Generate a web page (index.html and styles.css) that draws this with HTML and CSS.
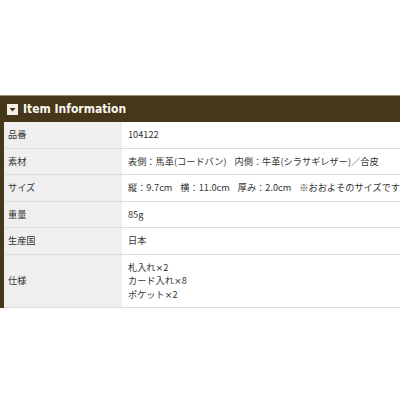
FILE: index.html
```html
<!DOCTYPE html>
<html lang="ja">
<head>
<meta charset="utf-8">
<link rel="stylesheet" href="styles.css">
</head>
<body>
<section class="info">
  <h2 class="info-title">
    <svg class="info-icon" width="11" height="11" viewBox="0 0 11 11"><rect width="11" height="11" fill="#f4efe6"/><path d="M2.5 4 L8.5 4 L5.5 7.5 Z" fill="#46371a"/></svg>
    <span>Item Information</span>
  </h2>
  <div class="info-table">
    <div class="row"><div class="th">品番</div><div class="td">104122</div></div>
    <div class="row"><div class="th">素材</div><div class="td">表側：馬革(コードバン)<span class="gap"> </span>内側：牛革(シラサギレザー)／合皮</div></div>
    <div class="row"><div class="th">サイズ</div><div class="td">縦：9.7cm<span class="gap"> </span>横：11.0cm<span class="gap"> </span>厚み：2.0cm<span class="gap"> </span>※おおよそのサイズです</div></div>
    <div class="row"><div class="th">重量</div><div class="td">85g</div></div>
    <div class="row"><div class="th">生産国</div><div class="td">日本</div></div>
    <div class="row"><div class="th">仕様</div><div class="td">札入れ<span class="x">×</span>2<br>カード入れ<span class="x">×</span>8<br>ポケット<span class="x">×</span>2</div></div>
  </div>
</section>
</body>
</html>
```
FILE: styles.css
```css
html, body { margin: 0; padding: 0; background: #fff; }
body { font-family: "Noto Sans CJK JP", "DejaVu Sans", sans-serif; color: #333; }
.info { margin-top: 95px; background: #46371a; border-top: 1px solid #9a8c6e; padding-left: 4px; }
.info-title {
  margin: 0 0 0 -4px; height: 26px; display: flex; align-items: center; gap: 5px;
  padding-left: 7px;
  font-family: "DejaVu Sans", sans-serif; font-stretch: condensed; font-weight: bold; font-size: 12px; color: #fbf7ee;
}
.info-icon { display: block; }
.info-table { background: #fff; }
.row { display: grid; grid-template-columns: 118px 1fr; border-bottom: 1px solid #dcdcdc; }
.th, .td { padding: 6px 6px; font-size: 9.2px; line-height: 13.5px; }
.th { background: #efefef; display: flex; align-items: center; padding-left: 4px; }
.td { background: #fff; white-space: nowrap; }
.gap { display: inline-block; width: 8px; }
.x { font-family: "DejaVu Sans", sans-serif; }
```
